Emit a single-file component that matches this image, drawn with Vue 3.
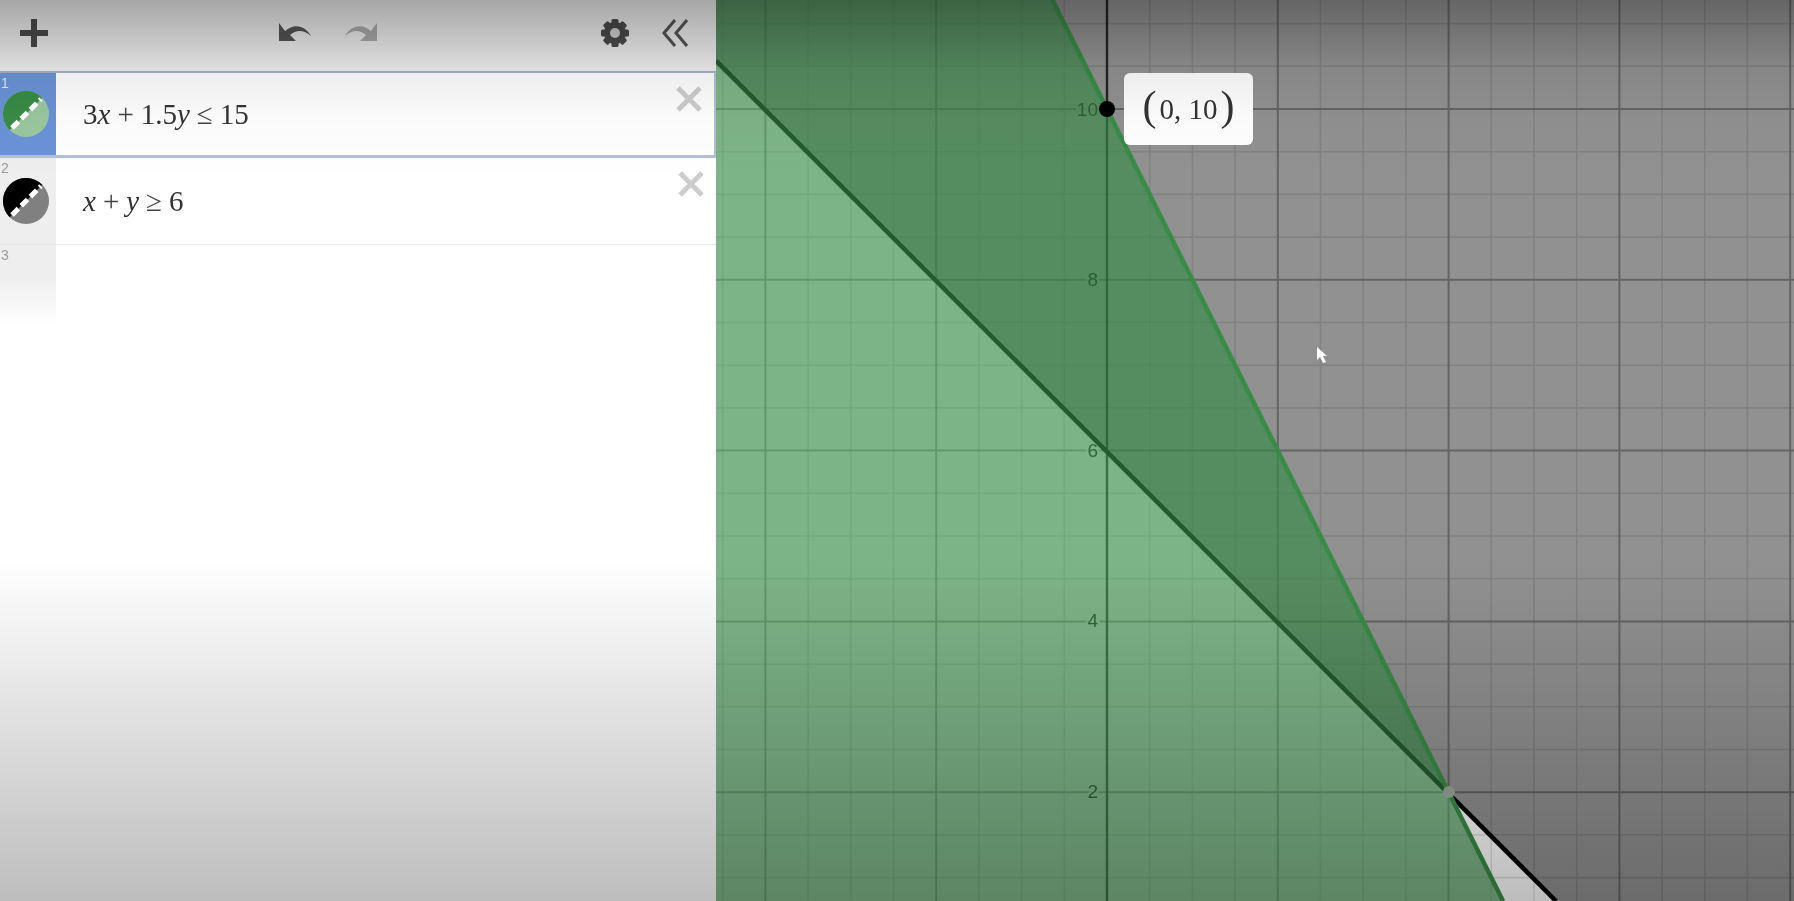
<script setup>
const UNIT = 42.7
const AX = 1107
const AY = 109
const vLines = []
for (let i = -9; i <= 16; i++) {
  vLines.push({ x: AX + i * UNIT, kind: i === 0 ? 'axis' : i % 4 === 0 ? 'major' : 'minor' })
}
const hLines = []
for (let i = -3; i <= 19; i++) {
  hLines.push({ y: AY + i * UNIT, kind: i === 0 ? 'major' : i % 4 === 0 ? 'major' : 'minor' })
}
const ticks = [
  { t: '10', y: 109 },
  { t: '8', y: 279 },
  { t: '6', y: 450 },
  { t: '4', y: 620 },
  { t: '2', y: 791 }
]
</script>

<template>
  <div class="page">
    <aside class="panel">
      <header class="toolbar">
        <svg class="ico" width="34" height="34" viewBox="0 0 34 34"><path d="M17 3v28M3 17h28" stroke="#4b4b4b" stroke-width="6" /></svg>
        <div class="history">
          <svg width="38" height="26" viewBox="0 0 38 26"><path d="M2 3v18h17l-6-6c7-6 14-5 21 1-6-11-17-13-26-5L2 3z" fill="#555" /></svg>
          <svg width="38" height="26" viewBox="0 0 38 26"><path d="M36 3v18H19l6-6c-7-6-14-5-21 1 6-11 17-13 26-5l6-8z" fill="#aaa" /></svg>
        </div>
        <div class="right-tools">
          <svg width="30" height="30" viewBox="0 0 30 30">
            <g fill="#4b4b4b">
              <circle cx="15" cy="15" r="11" />
              <rect v-for="a in [0, 45, 90, 135]" :key="a" x="11.5" y="1" width="7" height="28" rx="1.5" :transform="`rotate(${a} 15 15)`" />
            </g>
            <circle cx="15" cy="15" r="5" fill="#d2d2d2" />
          </svg>
          <svg width="28" height="30" viewBox="0 0 28 30"><path d="M13 2 2 15l11 13M25 2 14 15l11 13" fill="none" stroke="#555" stroke-width="3" /></svg>
        </div>
      </header>

      <div class="row selected">
        <div class="gutter">
          <span class="num">1</span>
          <svg class="swatch" width="46" height="46" viewBox="0 0 46 46">
            <circle cx="23" cy="23" r="23" fill="#9ac8a0" />
            <path d="M6.7 39.3A23 23 0 0 1 39.3 6.7z" fill="#388c46" />
            <path d="M9 37 38 8" stroke="#fff" stroke-width="5" stroke-dasharray="9 4" />
          </svg>
        </div>
        <div class="expr"><span>3<i>x</i><span class="op">+</span>1.5<i>y</i><span class="op">≤</span>15</span></div>
        <svg class="close" width="26" height="26" viewBox="0 0 26 26"><path d="M2 2l22 22M24 2 2 24" stroke="#cdcdcd" stroke-width="5" /></svg>
      </div>

      <div class="row plain">
        <div class="gutter">
          <span class="num">2</span>
          <svg class="swatch" width="46" height="46" viewBox="0 0 46 46">
            <circle cx="23" cy="23" r="23" fill="#808080" />
            <path d="M6.7 39.3A23 23 0 0 1 39.3 6.7z" fill="#000" />
            <path d="M9 37 38 8" stroke="#fff" stroke-width="5" stroke-dasharray="9 4" />
          </svg>
        </div>
        <div class="expr"><span><i>x</i><span class="op">+</span><i>y</i><span class="op">≥</span>6</span></div>
        <svg class="close" width="26" height="26" viewBox="0 0 26 26"><path d="M2 2l22 22M24 2 2 24" stroke="#cdcdcd" stroke-width="5" /></svg>
      </div>

      <div class="row empty">
        <div class="gutter"><span class="num">3</span></div>
        <div class="expr"></div>
      </div>
    </aside>

    <main class="graph">
      <svg class="plot" width="1078" height="901" viewBox="716 0 1078 901">
        <rect x="716" y="0" width="1078" height="901" fill="#fff" />
        <line v-for="l in vLines.filter(v => v.kind === 'minor')" :key="'vm' + l.x" :x1="l.x" :x2="l.x" y1="0" y2="901" stroke="#e4e4e4" stroke-width="1.6" />
        <line v-for="l in hLines.filter(v => v.kind === 'minor')" :key="'hm' + l.y" x1="716" x2="1794" :y1="l.y" :y2="l.y" stroke="#e4e4e4" stroke-width="1.6" />
        <line v-for="l in vLines.filter(v => v.kind === 'major')" :key="'vM' + l.x" :x1="l.x" :x2="l.x" y1="0" y2="901" stroke="#b0b0b0" stroke-width="2" />
        <line v-for="l in hLines.filter(v => v.kind === 'major')" :key="'hM' + l.y" x1="716" x2="1794" :y1="l.y" :y2="l.y" stroke="#b0b0b0" stroke-width="2" />
        <line :x1="AX" :x2="AX" y1="0" y2="901" stroke="#404040" stroke-width="2.4" />
        <text v-for="t in ticks" :key="t.t" class="tick" x="1098" :y="t.y + 7">{{ t.t }}</text>

        <!-- x + y >= 6 -->
        <polygon points="716,60.7 1556,901 1794,901 1794,0 716,0" fill="#000" fill-opacity="0.43" />
        <line x1="716" y1="60.7" x2="1556" y2="901" stroke="#000" stroke-width="4.5" />
        <!-- 3x + 1.5y <= 15 -->
        <polygon points="716,0 1052.5,0 1503,901 716,901" fill="#388c46" fill-opacity="0.65" />
        <line x1="1052.5" y1="0" x2="1503" y2="901" stroke="#388c46" stroke-width="4.5" />

        <circle cx="1449" cy="792" r="6" fill="#9aa89c" />
        <circle :cx="AX" :cy="AY" r="8" fill="#000" />
        <path d="M1317 347v13l3-3 3 6 3-1-3-6h4z" fill="#fff" />
      </svg>
      <div class="label"><span class="paren">(</span>0,&nbsp;10<span class="paren">)</span></div>
    </main>

    <div class="vignette"></div>
  </div>
</template>

<style scoped>
.page {
  position: relative;
  display: flex;
  width: 1794px;
  height: 901px;
  overflow: hidden;
  background: #fff;
  filter: blur(0.6px);
}
.panel {
  width: 716px;
  flex: none;
  background: #fff;
  display: flex;
  flex-direction: column;
}
.toolbar {
  height: 71px;
  flex: none;
  background: #eeeeee;
  display: flex;
  align-items: center;
  padding: 0 26px 6px 17px;
  box-sizing: border-box;
}
.history {
  display: flex;
  gap: 26px;
  margin-left: 226px;
}
.right-tools {
  display: flex;
  align-items: center;
  gap: 32px;
  margin-left: auto;
}
.row {
  display: flex;
  position: relative;
  box-sizing: border-box;
}
.row.selected {
  height: 87px;
  border-top: 2px solid #aab0c4;
  border-bottom: 3px solid #b4bfda;
  border-right: 2px solid #b4bfda;
}
.row.plain {
  height: 87px;
  border-bottom: 1px solid #e6e6e6;
}
.row.empty {
  height: 80px;
}
.gutter {
  width: 56px;
  flex: none;
  position: relative;
  background: #eeeeee;
  display: flex;
  align-items: center;
  padding-left: 3px;
  box-sizing: border-box;
}
.selected .gutter {
  background: #6a93d6;
}
.empty .gutter {
  background: linear-gradient(#eeeeee, #eeeeee 40%, #ffffff);
}
.num {
  position: absolute;
  left: 1px;
  top: 2px;
  font: 14px "Liberation Sans", Arial, sans-serif;
  color: #9a9a9a;
}
.selected .num {
  color: #dfe8f7;
}
.expr {
  flex: 1;
  display: flex;
  align-items: center;
  padding-left: 27px;
  font: 29px "Liberation Serif", "Times New Roman", serif;
  color: #333;
}
.op {
  margin: 0 7px;
  color: #444;
}
.close {
  position: absolute;
  right: 12px;
  top: 13px;
}
.graph {
  flex: 1;
  position: relative;
}
.plot {
  display: block;
}
.tick {
  font: 19px "Liberation Sans", Arial, sans-serif;
  fill: #222;
  stroke: #fff;
  stroke-width: 5px;
  stroke-opacity: 0.8;
  paint-order: stroke;
  text-anchor: end;
}
.label {
  position: absolute;
  left: 408px;
  top: 73px;
  width: 129px;
  height: 72px;
  border-radius: 6px;
  background: #fff;
  display: flex;
  align-items: center;
  justify-content: center;
  font: 29px "Liberation Serif", "Times New Roman", serif;
  color: #333;
}
.paren {
  font-size: 42px;
  line-height: 1;
  margin-top: -6px;
  margin: -6px 3px 0;
}
.vignette {
  position: absolute;
  inset: 0;
  pointer-events: none;
  background: linear-gradient(
    rgba(0, 0, 0, 0.3) 0,
    rgba(0, 0, 0, 0.07) 70px,
    rgba(0, 0, 0, 0.02) 120px,
    rgba(0, 0, 0, 0) 180px,
    rgba(0, 0, 0, 0) 560px,
    rgba(0, 0, 0, 0.12) 720px,
    rgba(0, 0, 0, 0.26) 901px
  );
}
</style>
